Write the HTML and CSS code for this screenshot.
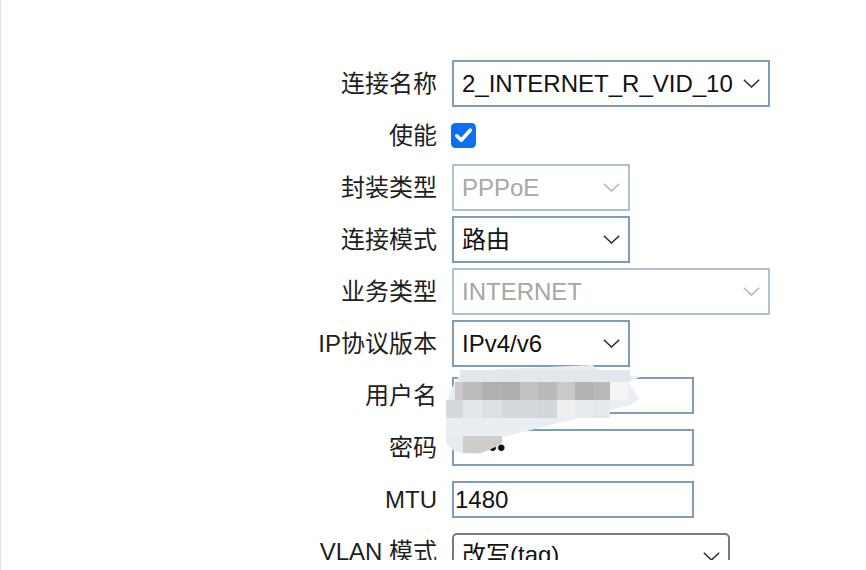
FILE: index.html
```html
<!DOCTYPE html>
<html lang="zh-CN">
<head>
<meta charset="utf-8">
<title>WAN</title>
<link rel="stylesheet" href="styles.css">
</head>
<body>
<div class="page">
  <form class="form">
    <label class="lbl">连接名称</label>
    <div class="select wide"><span class="val">2_INTERNET_R_VID_10</span><svg class="chev" width="17" height="9" viewBox="0 0 17 9"><polyline points="0.8,0.8 8.5,8 16.2,0.8"/></svg></div>

    <label class="lbl">使能</label>
    <div class="check"><svg width="25" height="25" viewBox="0 0 25 25"><rect x="0" y="0" width="25" height="25" rx="4.5" fill="#0b6ff3"/><polyline points="5.8,12.8 10.3,17.3 19.2,7.2" fill="none" stroke="#fff" stroke-width="3.6" stroke-linecap="round" stroke-linejoin="round"/></svg></div>

    <label class="lbl">封装类型</label>
    <div class="select short disabled"><span class="val">PPPoE</span><svg class="chev" width="17" height="9" viewBox="0 0 17 9"><polyline points="0.8,0.8 8.5,8 16.2,0.8"/></svg></div>

    <label class="lbl">连接模式</label>
    <div class="select short"><span class="val">路由</span><svg class="chev" width="17" height="9" viewBox="0 0 17 9"><polyline points="0.8,0.8 8.5,8 16.2,0.8"/></svg></div>

    <label class="lbl">业务类型</label>
    <div class="select wide disabled"><span class="val">INTERNET</span><svg class="chev" width="17" height="9" viewBox="0 0 17 9"><polyline points="0.8,0.8 8.5,8 16.2,0.8"/></svg></div>

    <label class="lbl">IP协议版本</label>
    <div class="select short"><span class="val">IPv4/v6</span><svg class="chev" width="17" height="9" viewBox="0 0 17 9"><polyline points="0.8,0.8 8.5,8 16.2,0.8"/></svg></div>

    <label class="lbl">用户名</label>
    <input class="field" type="text" value="">

    <label class="lbl">密码</label>
    <input class="field" type="password" value="123456">

    <label class="lbl">MTU</label>
    <input class="field" type="text" value="1480">

    <label class="lbl">VLAN 模式</label>
    <div class="select native"><span class="val">改写(tag)</span><svg class="chev" width="17" height="9" viewBox="0 0 17 9"><polyline points="0.8,0.8 8.5,8 16.2,0.8"/></svg></div>
  </form>

  <svg class="blur" width="210" height="110" viewBox="0 0 210 110">
    <path d="M7 42 Q9 22 21 9 L60 4 L152 0 L162 7 L200 12 L188 17 L200 34 L190 40 L63 72 L42 89 L22 88 L6 74 L6 55 Z" fill="#e9eef2"/>
    <rect x="20" y="5" width="170" height="12" fill="#e1e7ed"/>
    <rect x="15" y="17" width="8" height="18" fill="#cacaca"/>
    <rect x="23" y="17" width="19" height="18" fill="#bcbcbc"/>
    <rect x="42" y="17" width="20" height="18" fill="#b0b0b0"/>
    <rect x="62" y="17" width="18" height="18" fill="#aeaeae"/>
    <rect x="80" y="17" width="18" height="18" fill="#c1c1c1"/>
    <rect x="98" y="17" width="19" height="18" fill="#b9b9b9"/>
    <rect x="117" y="17" width="18" height="18" fill="#cacaca"/>
    <rect x="135" y="17" width="18" height="18" fill="#b3b3b3"/>
    <rect x="153" y="17" width="17" height="18" fill="#b9b9b9"/>
    <rect x="170" y="17" width="18" height="18" fill="#f5f5f5"/>
    <rect x="6" y="35" width="17" height="18" fill="#d5d9dd"/>
    <rect x="23" y="35" width="19" height="18" fill="#e4e7ea"/>
    <rect x="42" y="35" width="20" height="18" fill="#dde0e3"/>
    <rect x="62" y="35" width="36" height="18" fill="#d6d9dc"/>
    <rect x="98" y="35" width="19" height="18" fill="#d4d7da"/>
    <rect x="117" y="35" width="18" height="18" fill="#eceef0"/>
    <rect x="135" y="35" width="18" height="18" fill="#e9ecee"/>
    <rect x="153" y="35" width="17" height="18" fill="#e6e9ec"/>
    <path d="M6 71 L23 71 L23 88 L14 86 L6 78 Z" fill="#e8ebee"/>
    <path d="M23 71 L62 71 L62 78 Q50 86 38 88 L23 88 Z" fill="#cdcdcd"/>
  </svg>
</div>
</body>
</html>
```

FILE: styles.css
```css
html, body {
  margin: 0;
  padding: 0;
  background: #ffffff;
}

body {
  width: 866px;
  height: 570px;
  overflow: hidden;
  font-family: "Liberation Sans", "Noto Sans CJK SC", Arial, sans-serif;
  font-size: 24px;
  color: #1c1c1c;
}

.page {
  position: relative;
  min-height: 570px;
  border-left: 1px solid #e0e1e8;
}

.form {
  display: grid;
  grid-template-columns: 436px max-content;
  grid-auto-rows: 47px;
  column-gap: 15px;
  row-gap: 5px;
  padding-top: 60px;
  margin: 0;
  height: 500px;
  overflow: hidden;
}

.lbl {
  justify-self: end;
  align-self: center;
  line-height: 28px;
  white-space: nowrap;
  color: #1e1e1e;
}

.select {
  box-sizing: border-box;
  height: 47px;
  display: flex;
  align-items: center;
  justify-content: space-between;
  padding: 0 8px 0 8px;
  border: 2px solid #7f9db9;
  background: #fff;
  color: #111;
}

.select .val {
  line-height: 28px;
  white-space: nowrap;
}

.select .chev {
  flex: none;
  fill: none;
  stroke: #2b2b2b;
  stroke-width: 1.5;
}

.wide { width: 318px; }
.short { width: 178px; }

.disabled {
  border-color: #aec1d3;
  color: #a6a6a6;
}

.disabled .chev { stroke: #b3b3b3; }

.native {
  width: 278px;
  height: 46px;
  align-self: start;
  margin-top: 5px;
  border: 2px solid #7b7b7b;
  border-radius: 5px;
  align-items: center;
}

.native .val {
  align-self: flex-start;
  margin-top: 6px;
}

.check {
  align-self: center;
  width: 25px;
  height: 25px;
  margin-left: -1px;
}

.check svg { display: block; }

.field {
  box-sizing: border-box;
  width: 242px;
  height: 37px;
  align-self: center;
  margin: 0;
  padding: 0 1px;
  border: 2px solid #7f9db9;
  font-family: "Liberation Sans", "Noto Sans CJK SC", Arial, sans-serif;
  font-size: 24px;
  color: #111;
  background: #fff;
  outline: none;
}

.blur {
  position: absolute;
  left: 439px;
  top: 365px;
}
```
